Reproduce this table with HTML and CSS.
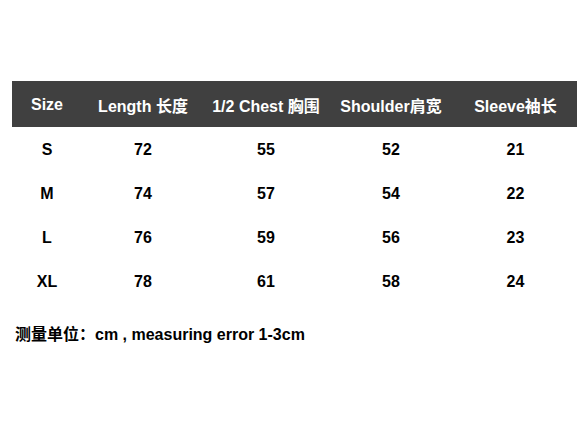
FILE: index.html
```html
<!DOCTYPE html>
<html>
<head>
<meta charset="utf-8">
<link rel="stylesheet" href="styles.css">
</head>
<body>
<div class="page">
  <div class="table">
    <div class="row head">
      <div>Size</div><div>Length 长度</div><div>1/2 Chest 胸围</div><div>Shoulder肩宽</div><div>Sleeve袖长</div>
    </div>
    <div class="row"><div>S</div><div>72</div><div>55</div><div>52</div><div>21</div></div>
    <div class="row"><div>M</div><div>74</div><div>57</div><div>54</div><div>22</div></div>
    <div class="row"><div>L</div><div>76</div><div>59</div><div>56</div><div>23</div></div>
    <div class="row"><div>XL</div><div>78</div><div>61</div><div>58</div><div>24</div></div>
  </div>
  <p class="note">测量单位：cm , measuring error 1-3cm</p>
</div>
</body>
</html>
```
FILE: styles.css
```css
html, body {
  margin: 0;
  padding: 0;
  background: #fff;
}
.page {
  padding: 81px 9px 0 12px;
  font-family: "Liberation Sans", Arial, "Noto Sans CJK SC", sans-serif;
  font-weight: bold;
  font-size: 16px;
  color: #000;
}
.table {
  width: 565px;
}
.row {
  display: grid;
  box-sizing: border-box;
  grid-template-columns: 70px 122px 124px 126px 123px;
  height: 44px;
  padding-top: 2px;
  align-items: center;
  text-align: center;
}
.row.head {
  height: 46px;
  background: #404040;
  color: #fff;
}
.note {
  margin: 21px 0 0 3px;
  line-height: 22px;
}
```
